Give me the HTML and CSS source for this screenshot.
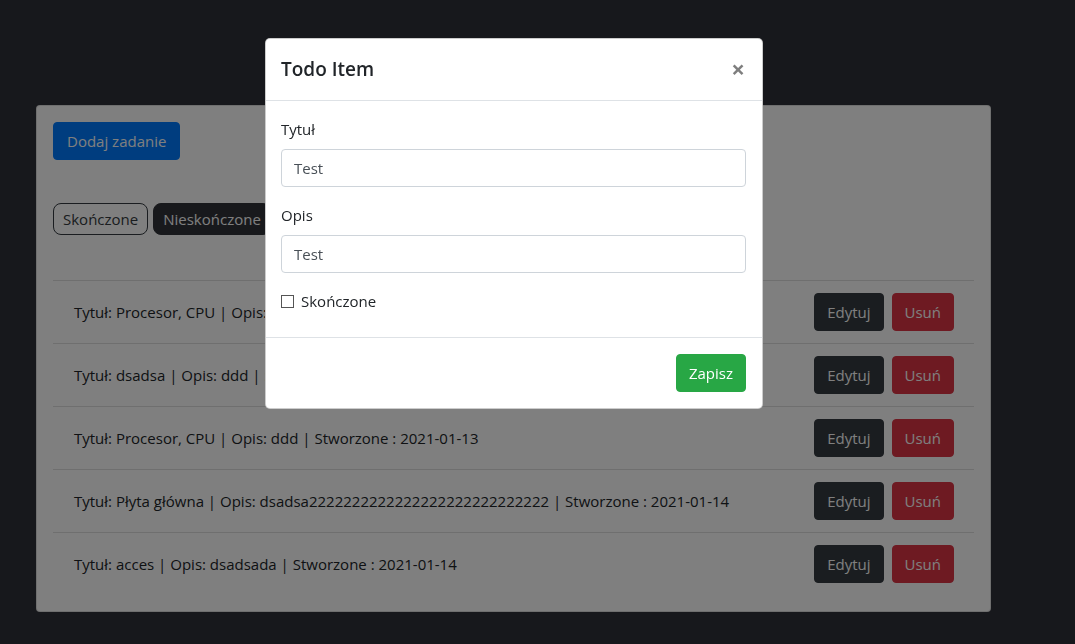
FILE: index.html
```html
<!DOCTYPE html>
<html lang="pl">
<head>
<meta charset="utf-8">
<title>Todo</title>
<link rel="stylesheet" href="styles.css">
</head>
<body>
<div class="page">
  <div class="card">
    <div class="toolbar">
      <button class="btn btn-primary">Dodaj zadanie</button>
    </div>
    <div class="filters">
      <button class="pill pill-outline">Skończone</button>
      <button class="pill pill-dark">Nieskończone</button>
    </div>
    <ul class="list">
      <li class="item"><span class="item-text">Tytuł: Procesor, CPU | Opis: ddd | Stworzone : 2021-01-13</span><span class="actions"><button class="btn btn-dark">Edytuj</button><button class="btn btn-danger">Usuń</button></span></li>
      <li class="item"><span class="item-text">Tytuł: dsadsa | Opis: ddd | Stworzone : 2021-01-13</span><span class="actions"><button class="btn btn-dark">Edytuj</button><button class="btn btn-danger">Usuń</button></span></li>
      <li class="item"><span class="item-text">Tytuł: Procesor, CPU | Opis: ddd | Stworzone : 2021-01-13</span><span class="actions"><button class="btn btn-dark">Edytuj</button><button class="btn btn-danger">Usuń</button></span></li>
      <li class="item"><span class="item-text">Tytuł: Płyta główna | Opis: dsadsa2222222222222222222222222222 | Stworzone : 2021-01-14</span><span class="actions"><button class="btn btn-dark">Edytuj</button><button class="btn btn-danger">Usuń</button></span></li>
      <li class="item"><span class="item-text">Tytuł: acces | Opis: dsadsada | Stworzone : 2021-01-14</span><span class="actions"><button class="btn btn-dark">Edytuj</button><button class="btn btn-danger">Usuń</button></span></li>
    </ul>
  </div>
</div>

<div class="backdrop"></div>

<div class="modal">
  <div class="modal-header">
    <h5 class="modal-title">Todo Item</h5>
    <button class="close" aria-label="Close">×</button>
  </div>
  <div class="modal-body">
    <div class="form-group">
      <label class="form-label">Tytuł</label>
      <input class="form-control" type="text" value="Test">
    </div>
    <div class="form-group">
      <label class="form-label">Opis</label>
      <input class="form-control" type="text" value="Test">
    </div>
    <label class="check"><span class="check-box"></span>Skończone</label>
  </div>
  <div class="modal-footer">
    <button class="btn btn-success">Zapisz</button>
  </div>
</div>
</body>
</html>
```

FILE: styles.css
```css
* { box-sizing: border-box; }

html, body {
  margin: 0;
  padding: 0;
}

body {
  background: #2e3038;
  font-family: "Open Sans", "Noto Sans", sans-serif;
  font-size: 15px;
  line-height: 24px;
  color: #212529;
  height: 644px;
  overflow: hidden;
}

.page {
  padding: 105px 0 0 36px;
}

.card {
  width: 955px;
  background: #fff;
  border: 1px solid rgba(0,0,0,.125);
  border-radius: 4px;
  padding: 16px;
}

.btn {
  font-family: inherit;
  font-size: 15px;
  line-height: 24px;
  padding: 6px 12px;
  border: 1px solid transparent;
  border-radius: 4px;
  color: #fff;
  cursor: pointer;
}

.btn-primary { background: #007bff; border-color: #007bff; padding: 6px 13px; }
.btn-dark { background: #343a40; border-color: #343a40; }
.btn-danger { background: #dc3545; border-color: #dc3545; }
.btn-success { background: #28a745; border-color: #28a745; }

.toolbar { display: flex; }

.filters {
  display: flex;
  gap: 5px;
  margin-top: 43px;
}

.pill {
  font-family: inherit;
  font-size: 15px;
  line-height: 24px;
  padding: 3px 9px;
  border-radius: 8px;
  border: 1px solid #343a40;
}

.pill-outline { background: #fff; color: #343a40; }
.pill-dark { background: #313339; color: #fff; border-color: #313339; }

.list {
  list-style: none;
  margin: 45px 0 0 0;
  padding: 0;
}

.item {
  display: flex;
  align-items: center;
  justify-content: space-between;
  padding: 12px 20px 12px 21px;
  border-top: 1px solid rgba(0,0,0,.125);
}

.actions {
  display: flex;
  gap: 8px;
}

.backdrop {
  position: fixed;
  inset: 0;
  background: rgba(0,0,0,.5);
}

.modal {
  position: fixed;
  top: 38px;
  left: 265px;
  width: 498px;
  background: #fff;
  border: 1px solid rgba(0,0,0,.2);
  border-radius: 5px;
}

.modal-header {
  display: flex;
  align-items: center;
  justify-content: space-between;
  padding: 15px 16px 16px 15px;
  border-bottom: 1px solid #dee2e6;
}

.modal-title {
  margin: 0;
  font-size: 19px;
  line-height: 30px;
  font-weight: 600;
}

.close {
  background: none;
  border: 0;
  padding: 0 1px 0 0;
  font-family: inherit;
  font-size: 24px;
  line-height: 24px;
  font-weight: 700;
  color: #000;
  opacity: .5;
}

.modal-body {
  padding: 16px 16px 16px 15px;
}

.form-group { margin-bottom: 16px; }

.form-label {
  display: block;
  margin-bottom: 8px;
}

.form-control {
  display: block;
  width: 100%;
  height: 38px;
  padding: 6px 12px;
  font-family: inherit;
  font-size: 15px;
  line-height: 24px;
  color: #495057;
  border: 1px solid #ced4da;
  border-radius: 4px;
  background: #fff;
}

.check {
  display: flex;
  align-items: center;
  gap: 7px;
  margin-bottom: 8px;
}

.check-box {
  width: 13px;
  height: 13px;
  border: 1px solid #555;
  background: #fff;
}

.modal-footer {
  display: flex;
  justify-content: flex-end;
  padding: 16px;
  border-top: 1px solid #dee2e6;
}
```
